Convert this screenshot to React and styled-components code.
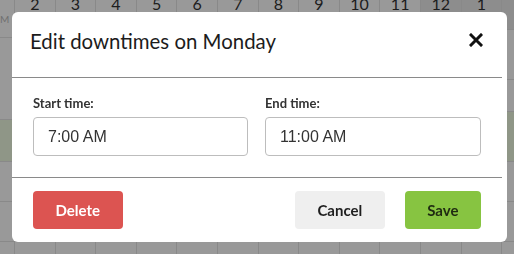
import React from "react";
import styled, { createGlobalStyle } from "styled-components";

const GlobalStyle = createGlobalStyle`
  html, body {
    margin: 0;
    padding: 0;
    background: #ffffff;
    overflow: hidden;
  }
  body {
    font-family: Lato, "Noto Sans", sans-serif;
  }
`;

const Calendar = styled.div`
  display: flex;
  width: 514px;
  height: 254px;
  overflow: hidden;
  background: #ffffff;
`;

const LabelColumn = styled.div`
  flex: none;
  width: 15px;
  display: flex;
  flex-direction: column;
  border-right: 1px solid #e4e4e4;
  box-sizing: border-box;
`;

const LabelCell = styled.div`
  flex: none;
  height: ${(p) => p.$h}px;
  box-sizing: border-box;
  border-bottom: 1px solid #e4e4e4;
  background: ${(p) => (p.$tint ? "#eefae2" : "transparent")};
  font-size: 10px;
  line-height: ${(p) => p.$h}px;
  color: #bbbbbb;
  overflow: hidden;
  white-space: nowrap;
`;

const HourGrid = styled.div`
  flex: none;
  width: 500px;
  display: flex;
  flex-direction: column;
`;

const GridRow = styled.div`
  flex: none;
  display: flex;
  height: ${(p) => p.$h}px;
  box-sizing: border-box;
  border-bottom: 1px solid #e4e4e4;
  background: ${(p) => (p.$tint ? "#eefae2" : "transparent")};
`;

const GridCell = styled.div`
  flex: none;
  width: 40.6px;
  box-sizing: border-box;
  border-right: 1px solid #e4e4e4;
  background: ${(p) => (p.$shade ? "#ececec" : "transparent")};
`;

const HourLabel = styled.span`
  display: block;
  margin-top: -4px;
  text-align: center;
  font-size: 16px;
  line-height: 16px;
  color: #333333;
`;

const Overlay = styled.div`
  position: fixed;
  inset: 0;
  padding: 12px;
  background: rgba(0, 0, 0, 0.4);
`;

const Modal = styled.div`
  width: 495px;
  height: 230px;
  box-sizing: border-box;
  padding-right: 5px;
  background: #ffffff;
  border-radius: 6px;
  display: flex;
  flex-direction: column;
`;

const Header = styled.div`
  display: flex;
  justify-content: space-between;
  align-items: flex-start;
  height: 66px;
  box-sizing: border-box;
  padding: 15px 19px 0 18px;
  border-bottom: 1px solid #8a8a8a;
`;

const Title = styled.h2`
  margin: 0;
  font-family: Lato, "Noto Sans", sans-serif;
  font-weight: 400;
  font-size: 20.4px;
  line-height: 28px;
  color: #1c1c1c;
`;

const CloseButton = styled.button`
  margin-top: 6px;
  padding: 0;
  border: 0;
  background: none;
  width: 14px;
  height: 14px;
  display: flex;
  cursor: pointer;
`;

const Body = styled.div`
  display: grid;
  grid-template-columns: 215px 216px;
  column-gap: 17px;
  height: 100px;
  box-sizing: border-box;
  padding: 17px 21px 0;
  border-bottom: 1px solid #8a8a8a;
`;

const Field = styled.label`
  display: flex;
  flex-direction: column;
  gap: 6px;
`;

const FieldLabel = styled.span`
  font-family: Lato, "Noto Sans", sans-serif;
  font-weight: 700;
  font-size: 13px;
  line-height: 16px;
  color: #333333;
`;

const TimeInput = styled.input`
  width: 100%;
  height: 39px;
  box-sizing: border-box;
  border: 1px solid #bdbdbd;
  border-radius: 4px;
  padding: 0 14px;
  font-family: "Liberation Sans", Arial, sans-serif;
  font-size: 16px;
  color: #333333;
  background: #ffffff;
  outline: none;
`;

const Footer = styled.div`
  display: flex;
  align-items: flex-start;
  gap: 20px;
  padding: 13px 21px 0;
`;

const variants = {
  danger: { bg: "#dc5451", fg: "#ffffff" },
  plain: { bg: "#efefef", fg: "#1f1f1f" },
  success: { bg: "#87c441", fg: "#1f2b12" },
};

const Button = styled.button`
  height: 38px;
  padding: 0 22.5px;
  border: 0;
  border-radius: 4px;
  font-family: Lato, "Noto Sans", sans-serif;
  font-weight: 700;
  font-size: 15px;
  background: ${(p) => variants[p.$variant].bg};
  color: ${(p) => variants[p.$variant].fg};
  margin-right: ${(p) => (p.$push ? "auto" : "0")};
  cursor: pointer;
`;

const hours = ["2", "3", "4", "5", "6", "7", "8", "9", "10", "11", "12", "1", ""];
const rows = [
  { h: 50 },
  { h: 32 },
  { h: 50, tint: true },
  { h: 40 },
  { h: 40 },
  { h: 40 },
];

const CloseIcon = () => (
  <svg width="14" height="14" viewBox="0 0 14 14">
    <path d="M2 2 L12 12 M12 2 L2 12" stroke="#111" strokeWidth="3" strokeLinecap="square" />
  </svg>
);

export default function App() {
  return (
    <>
      <GlobalStyle />
      <Calendar>
        <LabelColumn>
          <LabelCell $h={38}>M</LabelCell>
          <LabelCell $h={82} />
          <LabelCell $h={42} $tint />
          <LabelCell $h={40} />
          <LabelCell $h={40} />
          <LabelCell $h={40} />
        </LabelColumn>
        <HourGrid>
          <GridRow $h={30}>
            {hours.map((h, i) => (
              <GridCell key={i} $shade={i >= 10}>
                <HourLabel>{h}</HourLabel>
              </GridCell>
            ))}
          </GridRow>
          {rows.map((r, ri) => (
            <GridRow key={ri} $h={r.h} $tint={r.tint}>
              {hours.map((_, i) => (
                <GridCell key={i} />
              ))}
            </GridRow>
          ))}
        </HourGrid>
      </Calendar>
      <Overlay>
        <Modal>
          <Header>
            <Title>Edit downtimes on Monday</Title>
            <CloseButton aria-label="Close">
              <CloseIcon />
            </CloseButton>
          </Header>
          <Body>
            <Field>
              <FieldLabel>Start time:</FieldLabel>
              <TimeInput defaultValue="7:00 AM" />
            </Field>
            <Field>
              <FieldLabel>End time:</FieldLabel>
              <TimeInput defaultValue="11:00 AM" />
            </Field>
          </Body>
          <Footer>
            <Button $variant="danger" $push>Delete</Button>
            <Button $variant="plain">Cancel</Button>
            <Button $variant="success">Save</Button>
          </Footer>
        </Modal>
      </Overlay>
    </>
  );
}
